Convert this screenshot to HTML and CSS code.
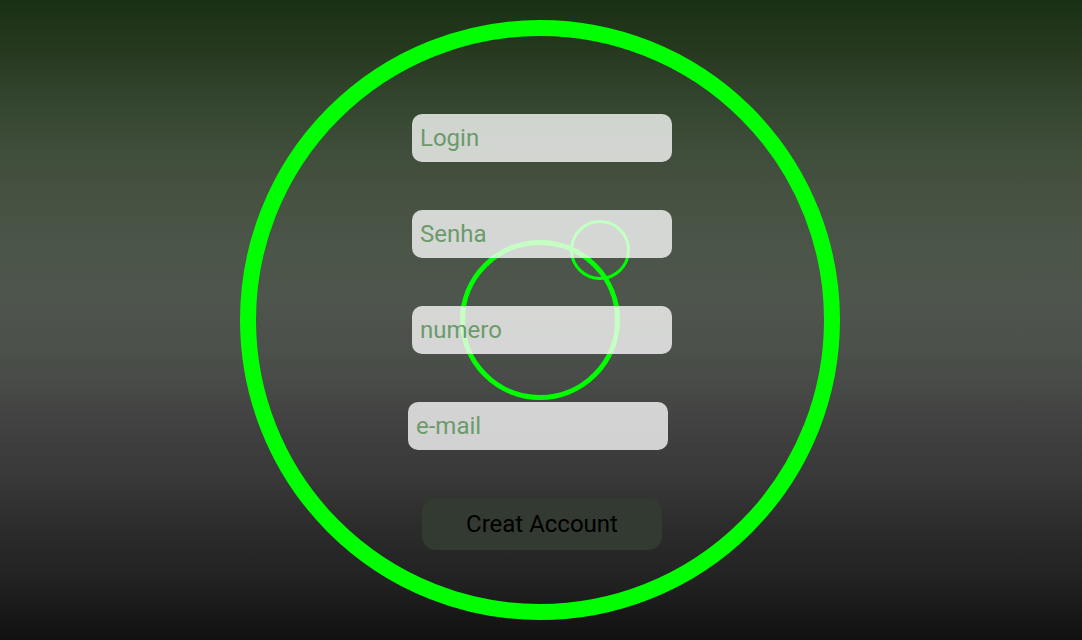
FILE: index.html
```html
<!DOCTYPE html>
<html lang="pt">
<head>
<meta charset="utf-8">
<title>Creat Account</title>
<link rel="stylesheet" href="styles.css">
</head>
<body>
<main class="stage">
  <div class="ring"></div>
  <div class="orb orb-mid"></div>
  <div class="orb orb-small"></div>
  <form class="form">
    <input class="field" type="text" placeholder="Login">
    <input class="field" type="password" placeholder="Senha">
    <input class="field" type="text" placeholder="numero">
    <input class="field field-email" type="email" placeholder="e-mail">
    <button class="submit" type="button">Creat Account</button>
  </form>
</main>
</body>
</html>
```
FILE: styles.css
```css
* { box-sizing: border-box; }
html, body { margin: 0; padding: 0; }
body {
  width: 1082px;
  height: 640px;
  overflow: hidden;
  font-family: Roboto, "Liberation Sans", sans-serif;
  background: linear-gradient(to bottom,
    #193014 0px,
    #26391f 50px,
    #33452e 100px,
    #3f4d3a 150px,
    #475243 200px,
    #4b5548 250px,
    #4e554d 300px,
    #4b504a 350px,
    #474946 390px,
    #404040 430px,
    #383838 480px,
    #2b2b2b 530px,
    #222222 580px,
    #161616 620px,
    #111111 640px);
}
.stage {
  position: relative;
  width: 1082px;
  height: 640px;
  display: grid;
  grid-template-columns: 1fr;
  grid-template-rows: 1fr;
}
.ring, .orb-mid, .form { grid-area: 1 / 1; }
.ring {
  width: 600px;
  height: 600px;
  margin: 20px 0 0 240px;
  border: 16px solid #00ff00;
  border-radius: 50%;
}
.orb {
  border-radius: 50%;
  border-style: solid;
  border-color: #00ff00;
}
.orb-mid {
  width: 160px;
  height: 160px;
  margin: 240px 0 0 460px;
  border-width: 5px;
}
.orb-small {
  position: absolute;
  left: 570px;
  top: 220px;
  width: 60px;
  height: 60px;
  border-width: 3px;
}
.form {
  position: relative;
  z-index: 1;
  align-self: start;
  justify-self: start;
  margin: 114px 0 0 412px;
  display: flex;
  flex-direction: column;
  align-items: flex-start;
  gap: 48px;
}
.field {
  width: 260px;
  height: 48px;
  border: none;
  outline: none;
  border-radius: 10px;
  padding: 0 8px;
  background: rgba(255, 255, 255, 0.77);
  font-family: inherit;
  font-size: 24px;
  color: #6b9b6b;
}
.field::placeholder { color: #6b9b6b; opacity: 1; }
.field-email { margin-left: -4px; }
.submit {
  width: 240px;
  height: 52px;
  margin-left: 10px;
  border: none;
  border-radius: 14px;
  background: #333a31;
  color: #000;
  font-family: inherit;
  font-size: 24px;
  padding: 0;
}
```
